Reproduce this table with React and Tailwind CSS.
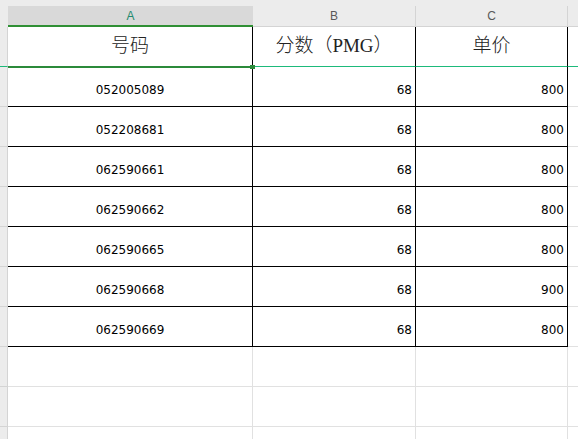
import React from 'react'

const rows = [
  ['052005089', '68', '800'],
  ['052208681', '68', '800'],
  ['062590661', '68', '800'],
  ['062590662', '68', '800'],
  ['062590665', '68', '800'],
  ['062590668', '68', '900'],
  ['062590669', '68', '800'],
]

const cols = 'grid grid-cols-[8px_245px_163px_152px_1fr]'
const cjk = { fontFamily: '"Liberation Serif", "Noto Sans CJK SC", serif' }
const num = { fontFamily: '"DejaVu Sans", "Liberation Sans", sans-serif' }

function RowHead() {
  return <div className="bg-[#ececec] border-r border-b border-[#d4d4d4]" />
}

export default function App() {
  return (
    <div className="w-[578px] h-[439px] overflow-hidden bg-white select-none">
      <div className="h-[6px] bg-[#ececec]" />

      {/* column letters */}
      <div className={`${cols} h-[21px] text-[12px] bg-[#ececec]`} style={{ fontFamily: '"Liberation Sans", sans-serif' }}>
        <div />
        <div className="bg-[#d9d9d9] border-b-2 border-[#2f8f34] flex items-center justify-center text-[#1f8a6e]">A</div>
        <div className="border-r border-b border-[#d4d4d4] flex items-center justify-center text-[#595959]">B</div>
        <div className="border-r border-b border-[#d4d4d4] flex items-center justify-center text-[#595959]">C</div>
        <div className="border-b border-[#d4d4d4]" />
      </div>

      {/* header row */}
      <div className={`${cols} h-[40px] text-[19px] font-light text-[#222]`} style={cjk}>
        <div className="bg-[#ececec] border-r border-b border-r-[#d4d4d4] border-b-[#1dba7b]" />
        <div className="relative border-r border-b border-r-black border-b-[#1dba7b] flex items-center justify-center">
          号码
          <div className="absolute left-0 right-0 bottom-[-2px] h-[2px] bg-[#2b8a3a] z-10" />
          <div className="absolute right-[-3px] bottom-[-3px] w-[5px] h-[4px] bg-[#2b8a3a] z-10" />
        </div>
        <div className="border-r border-b border-r-black border-b-[#1dba7b] flex items-center justify-center">分数（PMG）</div>
        <div className="border-r border-b border-r-black border-b-[#1dba7b] flex items-center justify-center">单价</div>
        <div className="border-b border-[#1dba7b]" />
      </div>

      {rows.map((r, i) => (
        <div key={i} className={`${cols} h-[40px] text-[12px] text-black`} style={num}>
          <RowHead />
          <div className="border-r border-b border-black flex items-center justify-center pt-[6px]">{r[0]}</div>
          <div className="border-r border-b border-black flex items-center justify-end pr-[3px] pt-[6px]">{r[1]}</div>
          <div className="border-r border-b border-black flex items-center justify-end pr-[3px] pt-[6px]">{r[2]}</div>
          <div className="border-b border-[#e1e1e1]" />
        </div>
      ))}

      {[0, 1, 2].map(i => (
        <div key={i} className={`${cols} h-[40px]`}>
          <RowHead />
          <div className="border-r border-b border-[#e1e1e1]" />
          <div className="border-r border-b border-[#e1e1e1]" />
          <div className="border-r border-b border-[#e1e1e1]" />
          <div className="border-b border-[#e1e1e1]" />
        </div>
      ))}
    </div>
  )
}
